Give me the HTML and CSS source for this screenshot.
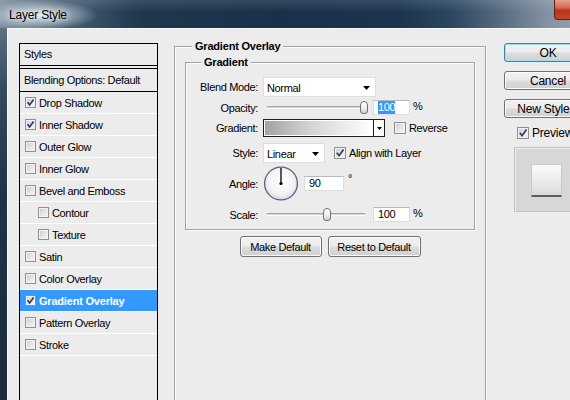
FILE: index.html
```html
<!DOCTYPE html>
<html>
<head>
<meta charset="utf-8">
<title>Layer Style</title>
<link rel="stylesheet" href="styles.css">
</head>
<body>
<div class="window">
  <div class="titlebar">
    <span class="title">Layer Style</span>
    <span class="close"></span>
  </div>
  <div class="body">
    <div class="styles-list">
      <div class="list-header">Styles</div>
      <div class="list-blend">Blending Options: Default</div>
      <div class="item"><span class="cb"><svg viewBox="0 0 9 9" width="9" height="9"><path d="M1.5 4.3 L3.6 6.9 L7.6 1.4" /></svg></span>Drop Shadow</div>
      <div class="item"><span class="cb"><svg viewBox="0 0 9 9" width="9" height="9"><path d="M1.5 4.3 L3.6 6.9 L7.6 1.4" /></svg></span>Inner Shadow</div>
      <div class="item"><span class="cb"></span>Outer Glow</div>
      <div class="item"><span class="cb"></span>Inner Glow</div>
      <div class="item"><span class="cb"></span>Bevel and Emboss</div>
      <div class="item sub"><span class="cb"></span>Contour</div>
      <div class="item sub"><span class="cb"></span>Texture</div>
      <div class="item"><span class="cb"></span>Satin</div>
      <div class="item"><span class="cb"></span>Color Overlay</div>
      <div class="item sel"><span class="cb"><svg viewBox="0 0 9 9" width="9" height="9"><path d="M1.5 4.3 L3.6 6.9 L7.6 1.4" /></svg></span>Gradient Overlay</div>
      <div class="item"><span class="cb"></span>Pattern Overlay</div>
      <div class="item"><span class="cb"></span>Stroke</div>
    </div>

    <fieldset class="group outer">
      <legend>Gradient Overlay</legend>
      <fieldset class="group inner">
        <legend>Gradient</legend>
        <div class="row r1">
          <span class="lbl">Blend Mode:</span>
          <div class="select wide"><span>Normal</span><svg class="arrow" viewBox="0 0 7 4" width="7" height="4"><polygon points="0,0 7,0 3.5,4"/></svg></div>
        </div>
        <div class="row r2">
          <span class="lbl">Opacity:</span>
          <div class="slider"><div class="track"></div><div class="thumb" style="left:97px"></div></div>
          <div class="num"><span class="hl">100</span></div>
          <span class="unit">%</span>
        </div>
        <div class="row r3">
          <span class="lbl">Gradient:</span>
          <div class="grad"><div class="grad-fill"></div><div class="grad-btn"><svg viewBox="0 0 5 3" width="5" height="3"><polygon points="0,0 5,0 2.5,3"/></svg></div></div>
          <span class="cb big chk-gap"></span><span>Reverse</span>
        </div>
        <div class="row r4">
          <span class="lbl">Style:</span>
          <div class="select narrow"><span>Linear</span><svg class="arrow" viewBox="0 0 7 4" width="7" height="4"><polygon points="0,0 7,0 3.5,4"/></svg></div>
          <span class="cb big chk-gap"><svg viewBox="0 0 10 10" width="10" height="10"><path d="M1.8 4.8 L4.1 7.7 L8.5 1.6" /></svg></span><span>Align with Layer</span>
        </div>
        <div class="row r5">
          <span class="lbl">Angle:</span>
          <svg class="dial" viewBox="0 0 36 35" width="36" height="35">
            <defs>
              <radialGradient id="dg" cx="50%" cy="45%" r="55%">
                <stop offset="0" stop-color="#ffffff"/>
                <stop offset="0.7" stop-color="#f3f3f5"/>
                <stop offset="1" stop-color="#d8dae2"/>
              </radialGradient>
            </defs>
            <circle cx="18" cy="17.5" r="16.4" fill="url(#dg)" stroke="#56657e" stroke-width="1.3"/>
            <line x1="18" y1="17.5" x2="18" y2="2" stroke="#000" stroke-width="1.3"/>
            <circle cx="18" cy="17.5" r="1.6" fill="#000"/>
          </svg>
          <div class="num deg">90</div>
          <span class="degsym">°</span>
        </div>
        <div class="row r6">
          <span class="lbl">Scale:</span>
          <div class="slider"><div class="track"></div><div class="thumb" style="left:60px"></div></div>
          <div class="num">100</div>
          <span class="unit">%</span>
        </div>
      </fieldset>
      <div class="btn-row">
        <button class="btn make">Make Default</button>
        <button class="btn reset">Reset to Default</button>
      </div>
    </fieldset>

    <div class="side">
      <button class="btn side-btn ok">OK</button>
      <button class="btn side-btn">Cancel</button>
      <button class="btn side-btn">New Style...</button>
      <div class="preview-row"><span class="cb big"><svg viewBox="0 0 10 10" width="10" height="10"><path d="M1.8 4.8 L4.1 7.7 L8.5 1.6" /></svg></span><span>Preview</span></div>
      <div class="preview-box"><div class="preview-swatch"></div></div>
    </div>
  </div>
</div>
</body>
</html>
```
FILE: styles.css
```css
html, body {
  margin: 0;
  padding: 0;
}
body {
  width: 570px;
  height: 400px;
  overflow: hidden;
  font-family: "Liberation Sans", Arial, sans-serif;
  font-size: 11px;
  letter-spacing: -0.35px;
  color: #000;
}
.window {
  width: 570px;
  height: 400px;
  display: flex;
  flex-direction: column;
  overflow: hidden;
  background: linear-gradient(180deg, #6f8193 0, #34495f 90px, #1f3247 200px, #1a2b3d 100%);
}
.titlebar {
  height: 28px;
  flex: none;
  display: flex;
  align-items: flex-start;
  background:
    radial-gradient(ellipse 60px 15px at 38px 15px, rgba(236,241,246,0.95) 0, rgba(200,212,224,0.55) 55%, rgba(160,178,196,0) 100%),
    linear-gradient(180deg, rgba(255,255,255,0.12) 0, rgba(255,255,255,0) 12px),
    linear-gradient(90deg, #7d8e9e 0, #4a6278 60px, #1f374f 140px, #19314a 280px, #1c3550 400px, #2b4660 450px, #5b6f83 505px, #8594a3 550px, #8f9dab 570px);
}
.title {
  margin: 7px 0 0 9px;
  font-size: 12px;
  line-height: 16px;
  letter-spacing: -0.2px;
  color: #000;
  text-shadow: 0 0 6px #fff;
}
.close {
  margin-left: auto;
  width: 15px;
  height: 19px;
  border-left: 1px solid #5c2418;
  border-bottom: 1px solid #5c2418;
  border-radius: 0 0 0 4px;
  background: linear-gradient(180deg, #e7a08c 0, #d36a52 40%, #b8321c 55%, #c5472e 100%);
}
.body {
  flex: 1;
  margin-left: 7px;
  display: flex;
  align-items: flex-start;
  background: #ececec;
  box-shadow: inset 1px 1px 0 #f9f9f9;
  overflow: hidden;
}

/* ---------- styles list ---------- */
.styles-list {
  flex: none;
  margin: 15px 0 0 12px;
  width: 139px;
  height: 370px;
  box-sizing: border-box;
  border: 1px solid #000;
  border-bottom: none;
}
.list-header {
  height: 21px;
  line-height: 21px;
  padding-left: 4px;
  border-bottom: 1px solid #000;
}
.list-blend {
  margin-top: 2px;
  height: 22px;
  line-height: 22px;
  padding-left: 4px;
  border-top: 1px solid #000;
  border-bottom: 1px solid #000;
}
.item {
  height: 21px;
  display: flex;
  align-items: center;
  padding-left: 5px;
  border-bottom: 1px solid #fff;
}
.item.sub {
  padding-left: 18px;
}
.item.sel {
  background: #3399ff;
  color: #fff;
  font-weight: bold;
  letter-spacing: -0.2px;
}
.cb {
  flex: none;
  width: 11px;
  height: 11px;
  box-sizing: border-box;
  border: 1px solid #8e8f8f;
  background: linear-gradient(135deg, #c9c9c9 0, #e4e4e4 50%, #f7f7f7 100%);
  box-shadow: inset 0 0 0 1px #f2f2f2;
  display: inline-flex;
  align-items: center;
  justify-content: center;
  margin-right: 3px;
}
.cb svg path {
  fill: none;
  stroke: #2c3b66;
  stroke-width: 1.7;
}
.cb.big {
  width: 12px;
  height: 12px;
}

/* ---------- group boxes ---------- */
.group {
  min-width: 0;
  box-sizing: border-box;
  border: 1px solid #a3a3a3;
  box-shadow: inset 1px 1px 0 #fbfbfb, 1px 1px 0 #fbfbfb;
}
.group legend {
  font-weight: bold;
  line-height: 14px;
  padding: 0 3px;
  background: #ececec;
  letter-spacing: -0.2px;
}
.outer {
  flex: none;
  margin: 11px 0 0 16px;
  width: 312px;
  height: 372px;
  padding: 0 10px;
}
.outer > legend {
  margin-left: 7px;
}
.inner {
  margin: 2px 0 0 0;
  padding: 8px 0 7px 0;
}
.inner > legend {
  margin-left: 15px;
}
.row {
  display: flex;
  align-items: center;
}
.r1 { height: 20px; }
.r2 { height: 15px; margin-top: 3px; }
.r3 { height: 18px; margin-top: 4px; }
.r4 { height: 20px; margin-top: 6px; }
.r5 { height: 35px; margin-top: 3px; }
.r6 { height: 15px; margin-top: 6px; }
.lbl {
  flex: none;
  width: 72px;
  margin-right: 5px;
  text-align: right;
}
.select {
  flex: none;
  height: 20px;
  box-sizing: border-box;
  background: #fff;
  border: 1px solid #dedede;
  display: flex;
  align-items: center;
  justify-content: space-between;
  padding: 1px 5px 0 3px;
}
.select.wide { width: 113px; }
.select.narrow { width: 62px; }
.arrow polygon, .grad-btn polygon { fill: #000; }
.slider {
  flex: none;
  position: relative;
  width: 106px;
  height: 15px;
  margin-right: 4px;
}
.track {
  position: absolute;
  left: 4px;
  right: 4px;
  top: 6px;
  height: 1px;
  border-top: 1px solid #a5a5a5;
  border-bottom: 1px solid #fdfdfd;
  background: #d4d4d4;
}
.thumb {
  position: absolute;
  top: 1px;
  width: 8px;
  height: 13px;
  box-sizing: border-box;
  border: 1px solid #707070;
  border-radius: 4px 4px 3px 3px;
  background: linear-gradient(180deg, #ffffff 0, #ececec 60%, #cfcfcf 100%);
}
.num {
  flex: none;
  width: 37px;
  height: 15px;
  box-sizing: border-box;
  background: #fff;
  border: 1px solid #dcdde2;
  border-top-color: #b5b9c2;
  padding-left: 4px;
  line-height: 13px;
}
.num.deg {
  width: 40px;
  margin-left: 5px;
}
.hl {
  background: #3399ff;
  color: #fff;
  display: inline-block;
  line-height: 13px;
}
.unit {
  margin-left: 3px;
  align-self: flex-start;
  line-height: 13px;
}
.degsym {
  align-self: flex-start;
  margin: 6px 0 0 4px;
}
.grad {
  flex: none;
  width: 122px;
  height: 18px;
  box-sizing: border-box;
  border: 1px solid #1d1d1d;
  display: flex;
}
.grad-fill {
  flex: 1;
  border: 1px solid #fff;
  background: linear-gradient(90deg, #a3a3a3 0, #d6d6d6 45%, #ffffff 100%);
}
.grad-btn {
  flex: none;
  width: 10px;
  border-left: 1px solid #1d1d1d;
  background: #fff;
  display: flex;
  align-items: center;
  justify-content: center;
}
.chk-gap {
  margin-left: 9px;
}
.dial {
  flex: none;
}

/* ---------- buttons ---------- */
.btn {
  font-family: "Liberation Sans", Arial, sans-serif;
  font-size: 11px;
  letter-spacing: -0.35px;
  color: #000;
  padding: 0;
  margin: 0;
  box-sizing: border-box;
  border: 1px solid #707070;
  border-radius: 3px;
  background: linear-gradient(180deg, #f2f2f2 0, #ebebeb 48%, #dddddd 52%, #cfcfcf 100%);
  box-shadow: inset 0 0 0 1px #fbfbfb;
}
.btn-row {
  display: flex;
  justify-content: center;
  gap: 6px;
  margin-top: 6px;
}
.btn-row .btn {
  height: 21px;
}
.make { width: 82px; }
.reset { width: 93px; }
.side {
  flex: none;
  margin: 15px 0 0 18px;
  width: 88px;
  display: flex;
  flex-direction: column;
}
.side-btn {
  height: 19px;
  width: 88px;
  font-size: 12px;
  letter-spacing: -0.2px;
  margin-bottom: 9px;
  white-space: nowrap;
  overflow: hidden;
}
.ok {
  border-color: #3c7fb1;
  box-shadow: inset 0 0 0 1px #9fdcf6;
}
.preview-row {
  display: flex;
  align-items: center;
  margin: 0 0 0 13px;
  height: 12px;
  font-size: 12px;
  letter-spacing: -0.2px;
}
.preview-box {
  margin: 8px 0 0 10px;
  width: 70px;
  height: 65px;
  box-sizing: border-box;
  background: #d7d7d7;
  border: 1px solid #c4c4c4;
  box-shadow: inset 1px 1px 0 #ececec;
  padding: 16px 0 0 16px;
}
.preview-swatch {
  width: 31px;
  height: 33px;
  box-sizing: border-box;
  background: linear-gradient(180deg, #fbfbfb 0, #e9e9e9 60%, #dadada 100%);
  border: 1px solid #c9c9c9;
  border-bottom: 2px solid #5e5e5e;
}
```
